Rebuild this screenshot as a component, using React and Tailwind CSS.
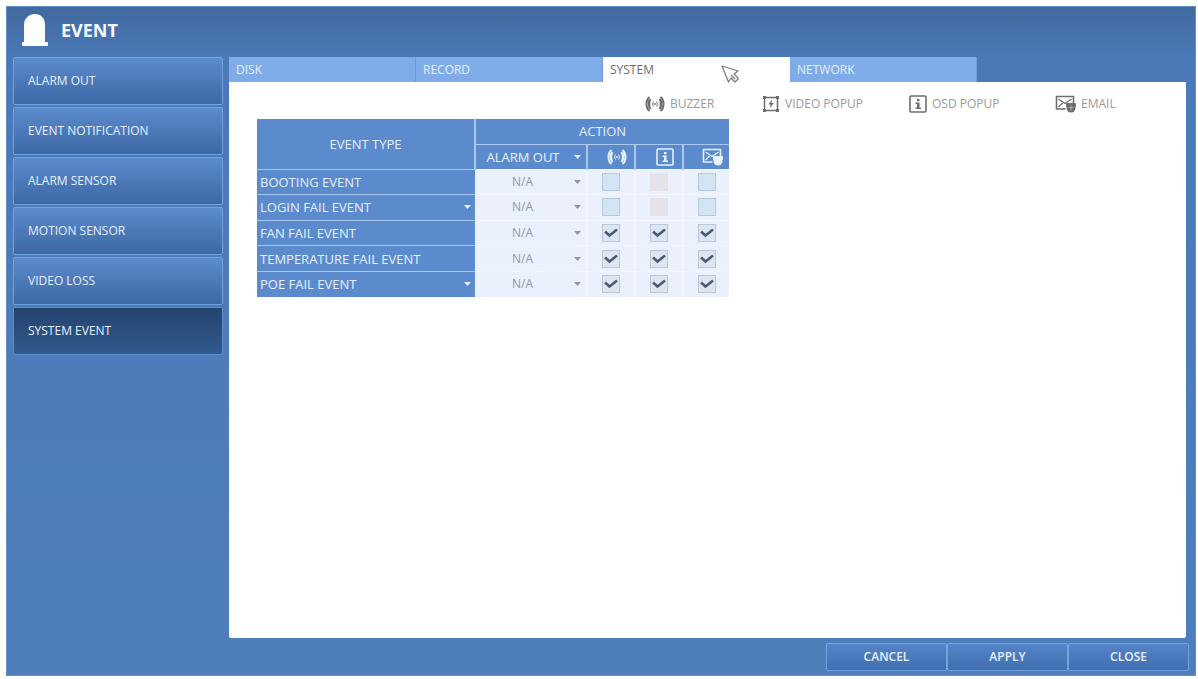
import { useState } from "react";

const menuItems = [
  "ALARM OUT",
  "EVENT NOTIFICATION",
  "ALARM SENSOR",
  "MOTION SENSOR",
  "VIDEO LOSS",
  "SYSTEM EVENT",
];

const tabs = ["DISK", "RECORD", "SYSTEM", "NETWORK"];

const initialEvents = [
  { name: "BOOTING EVENT", expandable: false, buzzer: false, osd: null, email: false },
  { name: "LOGIN FAIL EVENT", expandable: true, buzzer: false, osd: null, email: false },
  { name: "FAN FAIL EVENT", expandable: false, buzzer: true, osd: true, email: true },
  { name: "TEMPERATURE FAIL EVENT", expandable: false, buzzer: true, osd: true, email: true },
  { name: "POE FAIL EVENT", expandable: true, buzzer: true, osd: true, email: true },
];

const BellIcon = () => (
  <svg className="w-7 h-8" viewBox="0 0 28 32" fill="#fdffff" aria-hidden="true">
    <path d="M3 28V11C3 4 8 0 14 0s10 4 10 11v17z" />
    <rect x="1" y="28" width="26" height="4" rx="1" />
  </svg>
);

const BuzzerIcon = () => (
  <svg className="w-5 h-4 shrink-0" viewBox="0 0 20 16" fill="none" stroke="currentColor" aria-hidden="true">
    <path d="M4.500 1C0.500 4 0.500 12 4.500 15M15.500 1c4 3 4 11 0 14" strokeWidth="2" />
    <path d="M5.500 3c-2 2-2 8 0 10M14.500 3c2 2 2 8 0 10" strokeWidth="2.400" />
    <path d="M8.500 5.500c-1 1.500-1 3.500 0 5M11.500 5.500c1 1.500 1 3.500 0 5" strokeWidth="1" />
    <circle cx="10" cy="8" r="0.900" fill="currentColor" stroke="none" />
  </svg>
);

const VideoIcon = () => (
  <svg className="w-[18px] h-[18px] shrink-0" viewBox="0 0 18 18" fill="none" stroke="currentColor" aria-hidden="true">
    <rect x="2.500" y="2.500" width="13" height="13" strokeWidth="1.500" />
    <path d="M1 1h3v3H1zM14 1h3v3h-3zM1 14h3v3H1zM14 14h3v3h-3z" fill="currentColor" stroke="none" />
    <path d="M10 4.500L6.500 9.500h2.200L7.800 13.500l4-5.500H9.400z" fill="currentColor" stroke="none" />
  </svg>
);

const InfoIcon = () => (
  <svg className="w-[18px] h-[18px] shrink-0" viewBox="0 0 18 18" fill="none" stroke="currentColor" aria-hidden="true">
    <rect x="1" y="1" width="16" height="16" rx="1" strokeWidth="1.600" />
    <path d="M8 4h2.500v2.300H8zM6.500 7.500h4v5h1.500v1.500H6.500v-1.500H8v-3.500H6.500z" fill="currentColor" stroke="none" />
  </svg>
);

const EmailIcon = () => (
  <svg className="w-[21px] h-[18px] shrink-0" viewBox="0 0 21 18" fill="none" stroke="currentColor" aria-hidden="true">
    <path d="M10.500 14H1.500V1.500h17V8" strokeWidth="1.600" strokeLinejoin="round" />
    <path d="M3.500 4l6.500 4.500L16.500 4M3.500 12l4-4" strokeWidth="1.300" />
    <rect x="11" y="8" width="10" height="4" rx="1" fill="currentColor" stroke="none" />
    <circle cx="16" cy="13" r="4.500" fill="currentColor" stroke="none" />
    <path d="M13.500 12.500h5M16 10.500v5" stroke="#ffffff" strokeOpacity="0.500" strokeWidth="0.800" />
  </svg>
);

const Arrow = () => (
  <svg className="w-[7px] h-[4px] shrink-0" viewBox="0 0 7 4" fill="currentColor" aria-hidden="true">
    <path d="M0 0h7L3.500 4z" />
  </svg>
);

const Pointer = () => (
  <svg
    className="absolute left-[118px] top-[8px] w-[19px] h-[19px]"
    viewBox="0 0 19 19"
    fill="#ffffff"
    stroke="#777777"
    strokeWidth="1.200"
    strokeLinejoin="round"
    aria-hidden="true"
  >
    <path d="M1 1l16 5-4 3 4.500 4.500-3.500 3.500-4-4-2.500 4z" />
    <path d="M10 10l4 4" />
  </svg>
);

const legend = [
  { label: "BUZZER", Icon: BuzzerIcon, width: "w-[117px]" },
  { label: "VIDEO POPUP", Icon: VideoIcon, width: "w-[147px]" },
  { label: "OSD POPUP", Icon: InfoIcon, width: "w-[146px]" },
  { label: "EMAIL", Icon: EmailIcon, width: "w-[131px]" },
];

const actions = [
  { key: "buzzer", label: "Buzzer", Icon: BuzzerIcon },
  { key: "osd", label: "OSD popup", Icon: InfoIcon },
  { key: "email", label: "Email", Icon: EmailIcon },
];

const CheckCell = ({ label, value, onChange }) => (
  <div className="grid place-items-center">
    <input
      type="checkbox"
      aria-label={label}
      checked={Boolean(value)}
      disabled={value === null}
      onChange={onChange}
      className="col-start-1 row-start-1 appearance-none w-[18px] h-[18px] border border-[#b3c9df] bg-[#d5e4f3] checked:border-[#bcc6d6] checked:bg-[#dde5f1] disabled:border-[#e4e2e9] disabled:bg-[#e6e3e8]"
    />
    {value && (
      <svg
        className="col-start-1 row-start-1 w-[14px] h-[10px] pointer-events-none"
        viewBox="0 0 14 10"
        fill="none"
        stroke="#4d5a72"
        strokeWidth="2.500"
        aria-hidden="true"
      >
        <path d="M1 3.500l4.500 4L13 1.500" />
      </svg>
    )}
  </div>
);

const App = () => {
  const [activeMenu, setActiveMenu] = useState("SYSTEM EVENT");
  const [activeTab, setActiveTab] = useState("SYSTEM");
  const [events, setEvents] = useState(initialEvents);

  const toggle = (index, key) => {
    setEvents((prev) =>
      prev.map((event, i) =>
        i === index ? { ...event, [key]: !event[key] } : event
      )
    );
  };

  return (
    <div className="min-h-screen flex bg-white pt-[6px] pl-[6px] pr-[2px] pb-[3px] font-['Open_Sans','Noto_Sans',sans-serif] text-[12px] leading-4 text-[#e4f1ff]">
      <div className="flex-1 flex flex-col border border-[#5f8fc8] bg-[linear-gradient(to_bottom,#41699f_0px,#4b79b8_50px,#4f7fba_100%)]">
        <header className="h-[50px] flex items-center gap-3 pl-[14px] pb-1">
          <BellIcon />
          <h1 className="text-[18px] leading-6 font-bold text-[#f2fbff]">EVENT</h1>
        </header>

        <div className="flex-1 flex pl-[6px] pr-[9px] gap-[6px]">
          <nav className="w-[210px] flex flex-col gap-[2px]">
            {menuItems.map((item) => (
              <button
                key={item}
                onClick={() => setActiveMenu(item)}
                className={`h-12 shrink-0 rounded-xs border pl-[14px] text-left ${
                  item === activeMenu
                    ? "border-[#5a8fce] bg-linear-to-b from-[#24446f] to-[#31598e]"
                    : "border-[#6fa3e2] bg-linear-to-b from-[#5c8bcd] to-[#3c68a5]"
                }`}
              >
                {item}
              </button>
            ))}
          </nav>

          <main className="flex-1 flex flex-col">
            <div role="tablist" className="flex h-[25px] shrink-0">
              {tabs.map((tab) => (
                <button
                  key={tab}
                  role="tab"
                  aria-selected={tab === activeTab}
                  onClick={() => setActiveTab(tab)}
                  className={`relative w-[187px] border-r pl-[7px] text-left ${
                    tab === activeTab
                      ? "border-white bg-white text-[#6c6c6c]"
                      : "border-[#6c9ad8] bg-[#7fabe8]"
                  }`}
                >
                  {tab}
                  {tab === "SYSTEM" && <Pointer />}
                </button>
              ))}
            </div>

            <section className="flex-1 bg-white rounded-b-xs pl-7 pb-7">
              <ul className="h-[37px] flex justify-end items-center pt-[6px] text-[#9a9a9a]">
                {legend.map(({ label, Icon, width }) => (
                  <li key={label} className={`flex items-center gap-[5px] ${width}`}>
                    <span className="text-[#6d6d6d]">
                      <Icon />
                    </span>
                    {label}
                  </li>
                ))}
              </ul>

              <table className="w-[472px] h-[178px] table-fixed border-collapse text-[13px]">
                <colgroup>
                  <col className="w-[218px]" />
                  <col className="w-[112px]" />
                  <col className="w-[48px]" />
                  <col className="w-[48px]" />
                  <col className="w-[46px]" />
                </colgroup>
                <thead className="bg-[#5c8bcd]">
                  <tr className="h-[25px]">
                    <th rowSpan={2} className="p-0 font-normal border-r-2 border-b border-[#a9c8ee]">
                      EVENT TYPE
                    </th>
                    <th colSpan={4} className="p-0 font-normal border-b border-[#a9c8ee]">
                      ACTION
                    </th>
                  </tr>
                  <tr className="h-[25px]">
                    <th className="p-0 font-normal border-r-2 border-[#a9c8ee]">
                      <div className="flex items-center gap-2 pl-1 pr-[5px]">
                        <select
                          aria-label="Alarm out for all events"
                          className="flex-1 appearance-none bg-transparent text-center"
                        >
                          <option>ALARM OUT</option>
                        </select>
                        <Arrow />
                      </div>
                    </th>
                    {actions.map(({ key, label, Icon }) => (
                      <th
                        key={key}
                        aria-label={label}
                        className="p-0 border-r-2 border-[#a9c8ee] last:border-r-0"
                      >
                        <div className="flex justify-center pl-[11px]">
                          <Icon />
                        </div>
                      </th>
                    ))}
                  </tr>
                </thead>
                <tbody>
                  {events.map((event, index) => (
                    <tr key={event.name} className="h-[25px] bg-[#eaf1fc]">
                      <th
                        scope="row"
                        className="p-0 font-normal bg-[#5c8bcd] border-t border-[#a9c8ee]"
                      >
                        <div className="flex items-center justify-between pl-[3px] pr-1">
                          {event.name}
                          {event.expandable && (
                            <button aria-label={`Expand ${event.name}`}>
                              <Arrow />
                            </button>
                          )}
                        </div>
                      </th>
                      <td className="p-0 border-t border-r-2 border-[#f3f7fd] text-[#9298a8]">
                        <div className="flex items-center gap-2 pl-1 pr-[5px]">
                          <select
                            aria-label={`Alarm out for ${event.name}`}
                            className="flex-1 appearance-none bg-transparent text-center text-[12px]"
                          >
                            <option>N/A</option>
                          </select>
                          <Arrow />
                        </div>
                      </td>
                      {actions.map(({ key, label }) => (
                        <td
                          key={key}
                          className="p-0 border-t border-r-2 border-[#f3f7fd] last:border-r-0"
                        >
                          <CheckCell
                            label={`${label} for ${event.name}`}
                            value={event[key]}
                            onChange={() => toggle(index, key)}
                          />
                        </td>
                      ))}
                    </tr>
                  ))}
                </tbody>
              </table>
            </section>
          </main>
        </div>

        <footer className="flex justify-end pt-[5px] pb-1 pr-[6px]">
          {["CANCEL", "APPLY", "CLOSE"].map((action) => (
            <button
              key={action}
              className="w-[121px] h-7 rounded-xs border border-[#6fa3e2] bg-linear-to-b from-[#5585c9] to-[#3f6fb0] font-semibold"
            >
              {action}
            </button>
          ))}
        </footer>
      </div>
    </div>
  );
};

export default App;
